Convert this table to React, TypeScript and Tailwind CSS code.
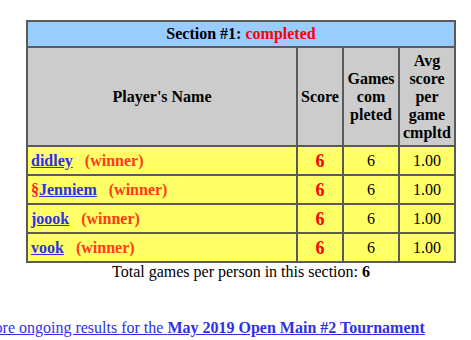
import React from "react";

type Player = {
  name: string;
  mark?: boolean;
};

const players: Player[] = [
  { name: "didley" },
  { name: "Jenniem", mark: true },
  { name: "joook" },
  { name: "vook" },
];

const cell = "border border-[#5a5a5a] p-0";

export default function App() {
  return (
    <div className="min-h-[340px] w-[471px] overflow-hidden bg-white [font-family:'Liberation_Serif',serif] text-[16px] text-black">
      <div className="pl-[26px] pt-[20px]">
        <table className="w-[430px] table-fixed border-separate border-spacing-0 border border-[#5a5a5a]">
          <colgroup>
            <col className="w-[270px]" />
            <col className="w-[46px]" />
            <col className="w-[56px]" />
            <col className="w-[56px]" />
          </colgroup>
          <tbody>
            <tr>
              <td
                colSpan={4}
                className={`${cell} h-[26px] bg-[#99ccff] text-center font-bold leading-[18px]`}
              >
                Section #1: <span className="text-[#ff0000]">completed</span>
              </td>
            </tr>
            <tr className="bg-[#cccccc] font-bold leading-[18px]">
              <td className={`${cell} h-[99px] text-center`}>Player's Name</td>
              <td className={`${cell} text-center`}>Score</td>
              <td className={`${cell} text-center`}>
                Games
                <br />
                com
                <br />
                pleted
              </td>
              <td className={`${cell} text-center`}>
                Avg
                <br />
                score
                <br />
                per
                <br />
                game
                <br />
                cmpltd
              </td>
            </tr>
            {players.map((p) => (
              <tr key={p.name} className="bg-[#ffff66] leading-[18px]">
                <td className={`${cell} h-[29px] pl-[3px] font-bold`}>
                  {p.mark && <span className="text-[#ff2020]">§</span>}
                  <a href="#" className="text-[#2f2fe8] underline">
                    {p.name}
                  </a>
                  <span className="ml-[12px] text-[#ff3a1a]">(winner)</span>
                </td>
                <td className={`${cell} text-center text-[18px] font-bold text-[#ff0000]`}>
                  6
                </td>
                <td className={`${cell} text-center`}>6</td>
                <td className={`${cell} text-center`}>1.00</td>
              </tr>
            ))}
          </tbody>
        </table>
        <p className="w-[430px] text-center leading-[18px]">
          Total games per person in this section: <b>6</b>
        </p>
      </div>

      <div className="mt-[38px] ml-[-45px] whitespace-nowrap leading-[18px]">
        <a href="#" className="text-[#2f2fe8] underline">
          See more ongoing results for the{" "}
          <b>May 2019 Open Main #2 Tournament</b>
        </a>
      </div>
      <div className="mt-[2px] ml-[30px] whitespace-nowrap leading-[18px] text-[#2f2fe8]">
        <span className="opacity-40">  (games in the main list are shown)</span>
      </div>
    </div>
  );
}
